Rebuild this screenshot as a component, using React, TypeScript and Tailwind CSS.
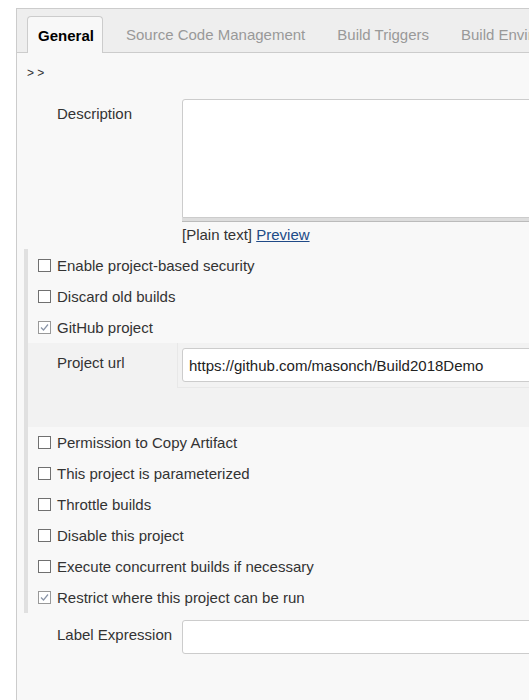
import React from 'react';

const Checkbox: React.FC<{ checked?: boolean }> = ({ checked }) => (
    <span
        className={`flex h-[13px] w-[13px] shrink-0 items-center justify-center border bg-white ${checked ? 'border-[#999]' : 'border-[#707070]'}`}
    >
        {checked && (
            <svg width="9" height="9" viewBox="0 0 9 9" fill="none">
                <path d="M1 4.5 L3.5 7 L8 1.5" stroke="#8a95a8" strokeWidth="1.2" />
            </svg>
        )}
    </span>
);

const CheckRow: React.FC<{ label: string; checked?: boolean }> = ({ label, checked }) => (
    <div className="flex h-[31px] items-center gap-[6px] pl-[10px]">
        <Checkbox checked={checked} />
        <span>{label}</span>
    </div>
);

const App: React.FC = () => {
    return (
        <div
            className="h-[700px] w-full overflow-hidden bg-white pl-[16px] pt-[8px] text-[15px] leading-[17px] text-[#333]"
            style={{ fontFamily: '"Liberation Sans", Arial, sans-serif' }}
        >
            <div className="h-full w-[700px] border-l border-t border-[#ccc] bg-[#f8f8f8]">
                {/* Tabs */}
                <div className="flex h-[44px] items-end border-b border-[#ccc] bg-[#eee] pl-[10px]">
                    <div className="relative -mb-px flex h-[37px] w-[76px] items-center justify-center rounded-t-[4px] border border-b-0 border-[#ccc] bg-[#f8f8f8] pl-[2px] font-bold text-black">
                        General
                    </div>
                    <div className="ml-[23px] flex h-[36px] items-center gap-[32px] whitespace-nowrap text-[#999]">
                        <span>Source Code Management</span>
                        <span>Build Triggers</span>
                        <span>Build Environment</span>
                    </div>
                </div>

                {/* Breadcrumb arrows */}
                <div className="flex h-[40px] items-center pl-[10px] text-[12px]">&gt; &gt;</div>

                {/* Description */}
                <div className="flex pt-[6px]">
                    <div className="w-[165px] shrink-0 pl-[40px] pt-[6px]">Description</div>
                    <div className="flex flex-col">
                        <div className="h-[119px] w-[400px] rounded-tl-[3px] border border-[#ccc] bg-white" />
                        <div className="h-[4px] w-[400px] border-b border-[#bbb] bg-[#ddd]" />
                        <div className="pt-[4px]">
                            [Plain text] <span className="text-[#204a87] underline">Preview</span>
                        </div>
                    </div>
                </div>

                {/* Options section */}
                <div className="ml-[7px] mt-[6px] border-l-4 border-[#e0e0e0] pt-px">
                    <CheckRow label="Enable project-based security" />
                    <CheckRow label="Discard old builds" />
                    <CheckRow label="GitHub project" checked />
                    <div className="flex h-[84px] bg-[#f2f2f2]">
                        <div className="w-[149px] shrink-0 pl-[29px] pt-[11px]">Project url</div>
                        <div className="h-[45px] border-b border-l border-[#e8e8e8] pl-[4px] pt-[5px]">
                            <div className="flex h-[34px] w-[400px] items-center rounded-[3px] border border-[#ccc] bg-white pl-[6px] text-[#222]">
                                https://github.com/masonch/Build2018Demo
                            </div>
                        </div>
                    </div>
                    <CheckRow label="Permission to Copy Artifact" />
                    <CheckRow label="This project is parameterized" />
                    <CheckRow label="Throttle builds" />
                    <CheckRow label="Disable this project" />
                    <CheckRow label="Execute concurrent builds if necessary" />
                    <CheckRow label="Restrict where this project can be run" checked />
                </div>

                {/* Label expression */}
                <div className="flex pt-[7px]">
                    <div className="w-[165px] shrink-0 pl-[40px] pt-[6px]">Label Expression</div>
                    <div className="h-[34px] w-[400px] rounded-[3px] border border-[#ccc] bg-white" />
                </div>
            </div>
        </div>
    );
};

export default App;
